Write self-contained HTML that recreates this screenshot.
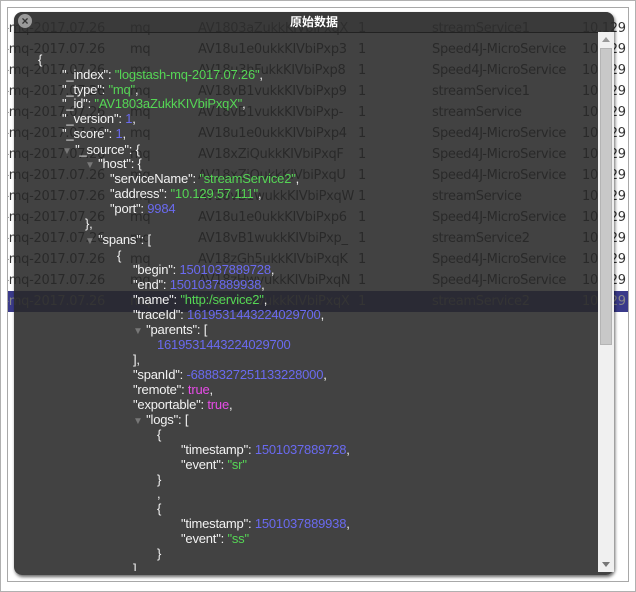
<!DOCTYPE html>
<html><head><meta charset="utf-8"><style>
body{margin:0;width:636px;height:592px;background:#fff;position:relative;overflow:hidden;font-family:"Liberation Sans","DejaVu Sans",sans-serif}
.frame{position:absolute;left:0;top:0;width:634px;height:590px;border:1px solid #b0b0b0;background:#fff}
.inner{position:absolute;left:7px;top:7px;width:620px;height:573px;border:1px solid #a8a8a8;background:#fff;overflow:hidden}
.tr{position:absolute;left:0;width:620px;height:21px;font-size:13px;color:#333;white-space:nowrap;font-family:"DejaVu Sans",sans-serif;letter-spacing:-0.3px}
.tr span{position:absolute;top:3px}
.modal{position:absolute;left:14px;top:12px;width:600px;height:563px;background:rgba(40,40,40,0.88);border-radius:8px;box-shadow:1px 2px 3px rgba(0,0,0,.6)}
.title{position:absolute;left:0;top:0;width:600px;height:20px;border-bottom:1px solid #222;background:rgba(50,50,50,.5);border-radius:8px 8px 0 0;color:#fff;font:bold 12px "Noto Sans CJK SC",sans-serif;text-align:center;line-height:20px}
.close{position:absolute;left:4px;top:2px;width:14px;height:14px;border-radius:50%;background:#9a9a9a;color:#333;font:bold 12px/14px sans-serif;text-align:center}
.sb{position:absolute;left:584px;top:20px;width:16px;height:540px;background:#f0f0f0}
.thumb{position:absolute;left:2px;top:16px;width:12px;height:297px;background:#c8c8c8;border:1px solid #b4b4b4;box-sizing:border-box}
.ln{position:absolute;font-size:13px;color:#f2f2f2;white-space:nowrap;height:15px;line-height:15px;letter-spacing:-0.2px}
.g{color:#55d655}.b{color:#6a6af0}.m{color:#e84ce8}
.tri{color:#777;font-size:10px}
</style></head><body>
<div class="frame"></div>
<div class="inner">
<div class="tr" style="top:10px"><span style="left:-18px">sh-mq-2017.07.26</span><span style="left:122px">mq</span><span style="left:190px">AV1803aZukkKIVbiPxqX</span><span style="left:350px">1</span><span style="left:424px">streamService1</span><span style="left:574px">10.129</span></div>
<div class="tr" style="top:31px"><span style="left:-18px">sh-mq-2017.07.26</span><span style="left:122px">mq</span><span style="left:190px">AV18u1e0ukkKIVbiPxp3</span><span style="left:350px">1</span><span style="left:424px">Speed4J-MicroService</span><span style="left:574px">10.129</span></div>
<div class="tr" style="top:52px"><span style="left:-18px">sh-mq-2017.07.26</span><span style="left:122px">mq</span><span style="left:190px">AV18u3hFukkKIVbiPxp8</span><span style="left:350px">1</span><span style="left:424px">Speed4J-MicroService</span><span style="left:574px">10.129</span></div>
<div class="tr" style="top:73px"><span style="left:-18px">sh-mq-2017.07.26</span><span style="left:122px">mq</span><span style="left:190px">AV18vB1vukkKIVbiPxp9</span><span style="left:350px">1</span><span style="left:424px">streamService1</span><span style="left:574px">10.129</span></div>
<div class="tr" style="top:94px"><span style="left:-18px">sh-mq-2017.07.26</span><span style="left:122px">mq</span><span style="left:190px">AV18vB1vukkKIVbiPxp-</span><span style="left:350px">1</span><span style="left:424px">streamService</span><span style="left:574px">10.129</span></div>
<div class="tr" style="top:115px"><span style="left:-18px">sh-mq-2017.07.26</span><span style="left:122px">mq</span><span style="left:190px">AV18u1e0ukkKIVbiPxp4</span><span style="left:350px">1</span><span style="left:424px">Speed4J-MicroService</span><span style="left:574px">10.129</span></div>
<div class="tr" style="top:136px"><span style="left:-18px">sh-mq-2017.07.26</span><span style="left:122px">mq</span><span style="left:190px">AV18xZiQukkKIVbiPxqF</span><span style="left:350px">1</span><span style="left:424px">Speed4J-MicroService</span><span style="left:574px">10.129</span></div>
<div class="tr" style="top:157px"><span style="left:-18px">sh-mq-2017.07.26</span><span style="left:122px">mq</span><span style="left:190px">AV18xZiQukkKIVbiPxqU</span><span style="left:350px">1</span><span style="left:424px">Speed4J-MicroService</span><span style="left:574px">10.129</span></div>
<div class="tr" style="top:178px"><span style="left:-18px">sh-mq-2017.07.26</span><span style="left:122px">mq</span><span style="left:190px">AV18vB1wukkKIVbiPxqW</span><span style="left:350px">1</span><span style="left:424px">streamService</span><span style="left:574px">10.129</span></div>
<div class="tr" style="top:199px"><span style="left:-18px">sh-mq-2017.07.26</span><span style="left:122px">mq</span><span style="left:190px">AV18u1e0ukkKIVbiPxp6</span><span style="left:350px">1</span><span style="left:424px">Speed4J-MicroService</span><span style="left:574px">10.129</span></div>
<div class="tr" style="top:220px"><span style="left:-18px">sh-mq-2017.07.26</span><span style="left:122px">mq</span><span style="left:190px">AV18vB1wukkKIVbiPxp_</span><span style="left:350px">1</span><span style="left:424px">streamService2</span><span style="left:574px">10.129</span></div>
<div class="tr" style="top:241px"><span style="left:-18px">sh-mq-2017.07.26</span><span style="left:122px">mq</span><span style="left:190px">AV18zGh5ukkKIVbiPxqK</span><span style="left:350px">1</span><span style="left:424px">Speed4J-MicroService</span><span style="left:574px">10.129</span></div>
<div class="tr" style="top:262px"><span style="left:-18px">sh-mq-2017.07.26</span><span style="left:122px">mq</span><span style="left:190px">AV18zHwvukkKIVbiPxqN</span><span style="left:350px">1</span><span style="left:424px">Speed4J-MicroService</span><span style="left:574px">10.129</span></div>
<div class="tr" style="top:283px;background:#3a3a8a;color:#888"><span style="left:-18px">sh-mq-2017.07.26</span><span style="left:122px">mq</span><span style="left:190px">AV18zHwvukkKIVbiPxqX</span><span style="left:350px">1</span><span style="left:424px">streamService2</span><span style="left:574px">10.129</span></div>
</div>
<div class="modal">
<div class="title"><div class="close">×</div>原始数据</div>
<div class="sb"><div style="position:absolute;left:4px;top:5px;border:4px solid transparent;border-bottom:5px solid #999;border-top:0"></div><div class="thumb"></div><div style="position:absolute;left:4px;bottom:5px;border:4px solid transparent;border-top:5px solid #777;border-bottom:0"></div></div>
</div>
<div id="j"></div>
<div style="position:absolute;left:0;top:0">
<div class="ln" style="left:38px;top:52px">{</div>
<div class="ln" style="left:62px;top:67px">"_index": <span class="g">"logstash-mq-2017.07.26"</span>,</div>
<div class="ln" style="left:62px;top:82px">"_type": <span class="g">"mq"</span>,</div>
<div class="ln" style="left:62px;top:96px">"_id": <span class="g">"AV1803aZukkKIVbiPxqX"</span>,</div>
<div class="ln" style="left:62px;top:111px">"_version": <span class="b">1</span>,</div>
<div class="ln" style="left:62px;top:126px">"_score": <span class="b">1</span>,</div>
<div class="ln" style="left:62px;top:142px"><span class="tri">▼</span> "_source": {</div>
<div class="ln" style="left:85px;top:156px"><span class="tri">▼</span> "host": {</div>
<div class="ln" style="left:110px;top:171px">"serviceName": <span class="g">"streamService2"</span>,</div>
<div class="ln" style="left:110px;top:186px">"address": <span class="g">"10.129.57.111"</span>,</div>
<div class="ln" style="left:110px;top:201px">"port": <span class="b">9984</span></div>
<div class="ln" style="left:85px;top:216px">},</div>
<div class="ln" style="left:85px;top:232px"><span class="tri">▼</span> "spans": [</div>
<div class="ln" style="left:117px;top:248px">{</div>
<div class="ln" style="left:133px;top:262px">"begin": <span class="b">1501037889728</span>,</div>
<div class="ln" style="left:133px;top:277px">"end": <span class="b">1501037889938</span>,</div>
<div class="ln" style="left:133px;top:292px">"name": <span class="g">"http:/service2"</span>,</div>
<div class="ln" style="left:133px;top:307px">"traceId": <span class="b">1619531443224029700</span>,</div>
<div class="ln" style="left:133px;top:322px"><span class="tri">▼</span> "parents": [</div>
<div class="ln b" style="left:157px;top:337px">1619531443224029700</div>
<div class="ln" style="left:133px;top:352px">],</div>
<div class="ln" style="left:133px;top:367px">"spanId": <span class="b">-6888327251133228000</span>,</div>
<div class="ln" style="left:133px;top:382px">"remote": <span class="m">true</span>,</div>
<div class="ln" style="left:133px;top:397px">"exportable": <span class="m">true</span>,</div>
<div class="ln" style="left:133px;top:412px"><span class="tri">▼</span> "logs": [</div>
<div class="ln" style="left:157px;top:427px">{</div>
<div class="ln" style="left:181px;top:442px">"timestamp": <span class="b">1501037889728</span>,</div>
<div class="ln" style="left:181px;top:457px">"event": <span class="g">"sr"</span></div>
<div class="ln" style="left:157px;top:472px">}</div>
<div class="ln" style="left:157px;top:486px">,</div>
<div class="ln" style="left:157px;top:501px">{</div>
<div class="ln" style="left:181px;top:516px">"timestamp": <span class="b">1501037889938</span>,</div>
<div class="ln" style="left:181px;top:531px">"event": <span class="g">"ss"</span></div>
<div class="ln" style="left:157px;top:546px">}</div>
<div class="ln" style="left:133px;top:561px;height:10px;overflow:hidden">]</div>
</div>
</body></html>
